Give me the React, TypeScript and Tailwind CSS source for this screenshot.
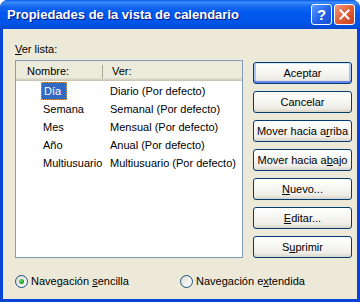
import React from "react";

const rows: [string, string][] = [
  ["Día", "Diario (Por defecto)"],
  ["Semana", "Semanal (Por defecto)"],
  ["Mes", "Mensual (Por defecto)"],
  ["Año", "Anual (Por defecto)"],
  ["Multiusuario", "Multiusuario (Por defecto)"],
];

const XpButton = ({
  children,
  isDefault,
}: {
  children: React.ReactNode;
  isDefault?: boolean;
}) => (
  <button
    className={
      "h-[22px] w-[99px] rounded-[3px] border border-[#003C74] bg-[linear-gradient(to_bottom,#FFFFFF_0%,#F7F7F4_40%,#EEEDE7_80%,#D8D2C6_100%)] text-[11px] leading-none text-black " +
      (isDefault
        ? "shadow-[inset_0_1px_0_#CEE7FF,inset_0_-2px_0_#6982EE,inset_2px_0_0_#A8C4F5,inset_-2px_0_0_#A8C4F5]"
        : "")
    }
  >
    {children}
  </button>
);

const Radio = ({ checked }: { checked?: boolean }) => (
  <span className="flex h-[13px] w-[13px] items-center justify-center rounded-full border border-[#1C5180] bg-[linear-gradient(135deg,#DCDCD7,#FFFFFF)]">
    {checked && (
      <span className="h-[5px] w-[5px] rounded-full bg-[radial-gradient(circle_at_35%_35%,#6EE06A,#21A121_60%,#1D8E1D)]" />
    )}
  </span>
);

export default function App() {
  return (
    <div className="h-[302px] w-[360px] overflow-hidden rounded-t-[8px] bg-[#0842D6] font-['Liberation_Sans',Arial,sans-serif] flex flex-col">
      {/* Title bar */}
      <div className="flex h-[29px] items-center bg-[linear-gradient(to_bottom,#0A5AE8_0%,#3A8DF8_8%,#1668EE_22%,#0058EE_45%,#0055E8_80%,#0047D2_100%)] pl-[7px] pr-[5px]">
        <span className="flex-1 text-[13px] font-bold text-white [text-shadow:1px_1px_0_#0A1883]">
          Propiedades de la vista de calendario
        </span>
        <div className="flex gap-[2px]">
          <div className="flex h-[21px] w-[21px] items-center justify-center rounded-[3px] border border-white bg-[linear-gradient(135deg,#5A9BFF,#1E5DEA_60%,#1B4FD0)] text-[15px] font-bold leading-none text-white">
            ?
          </div>
          <div className="flex h-[21px] w-[21px] items-center justify-center rounded-[3px] border border-white bg-[linear-gradient(135deg,#F09A7C,#E05A34_55%,#C8401E)]">
            <svg width="11" height="11" viewBox="0 0 11 11">
              <path d="M1.5 1.5 L9.5 9.5 M9.5 1.5 L1.5 9.5" stroke="white" strokeWidth="2" strokeLinecap="square" />
            </svg>
          </div>
        </div>
      </div>

      {/* Client area */}
      <div className="mx-[3px] mb-[3px] flex-1 bg-[#ECE9D8] pl-[12px] pr-[5px] pt-[13px] text-[11px] text-black">
        <div className="flex gap-[10px]">
          <div className="flex w-[228px] flex-col">
            <div className="h-[14px] leading-[14px]">
              <span className="underline">V</span>er lista:
            </div>
            <div className="mt-[4px] h-[198px] border border-[#7F9DB9] bg-white">
              <div className="flex h-[20px] items-center bg-[#EBEADB] shadow-[inset_0_-1px_0_#CBC7B8,inset_0_-2px_0_#D6D2C2,inset_0_-3px_0_#E2DECD]">
                <div className="flex h-full w-[86px] items-center pl-[11px]">Nombre:</div>
                <div className="h-[13px] w-[2px] border-l border-[#ACA899] border-r-white" />
                <div className="pl-[8px]">Ver:</div>
              </div>
              <div className="pt-[1px]">
                {rows.map(([name, view], i) => (
                  <div key={name} className="flex h-[18px] items-center">
                    <div className="w-[92px] pl-[25px]">
                      <span
                        className={
                          "flex h-[18px] items-center pl-[2px] pr-[5px] w-fit " +
                          (i === 0
                            ? "border border-dotted border-[#E0A04A] bg-[#316AC5] pl-[1px] text-white"
                            : "")
                        }
                      >
                        {name}
                      </span>
                    </div>
                    <div className="pl-[2px]">{view}</div>
                  </div>
                ))}
              </div>
            </div>
          </div>

          <div className="flex flex-col gap-[7px] pt-[20px]">
            <XpButton isDefault>Aceptar</XpButton>
            <XpButton>Cancelar</XpButton>
            <XpButton>
              Mover hacia a<span className="underline">r</span>riba
            </XpButton>
            <XpButton>
              Mover hacia a<span className="underline">b</span>ajo
            </XpButton>
            <XpButton>
              <span className="underline">N</span>uevo...
            </XpButton>
            <XpButton>
              <span className="underline">E</span>ditar...
            </XpButton>
            <XpButton>
              S<span className="underline">u</span>primir
            </XpButton>
          </div>
        </div>

        <div className="mt-[15px] flex items-center">
          <div className="flex w-[165px] items-center gap-[3px]">
            <Radio checked />
            <span>
              Navegación <span className="underline">s</span>encilla
            </span>
          </div>
          <div className="flex items-center gap-[3px]">
            <Radio />
            <span>
              Navegación e<span className="underline">x</span>tendida
            </span>
          </div>
        </div>
      </div>
    </div>
  );
}
